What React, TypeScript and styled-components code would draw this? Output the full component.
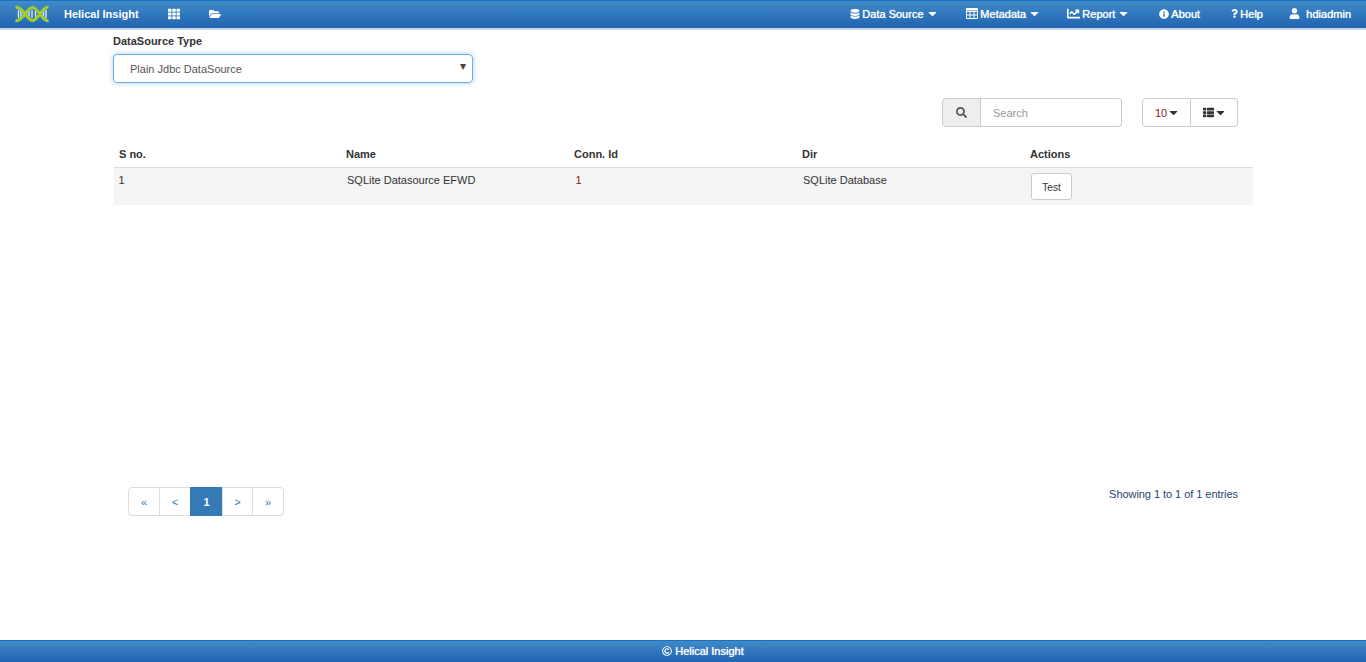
import React from 'react';
import styled, { createGlobalStyle } from 'styled-components';
import {
  FaCaretDown,
  FaChartLine,
  FaDatabase,
  FaFolderOpen,
  FaInfoCircle,
  FaQuestion,
  FaRegCopyright,
  FaSearch,
  FaTh,
  FaThList,
  FaUser,
} from 'react-icons/fa';

const GlobalStyle = createGlobalStyle`
  html, body {
    margin: 0;
    padding: 0;
    height: 100%;
    background: #fff;
    font-family: "Liberation Sans", Arial, sans-serif;
    font-size: 11px;
    color: #333;
  }
  * { box-sizing: border-box; }
`;

const Logo = () => (
  <svg width="34" height="18" viewBox="0 0 34 18" fill="none">
    <path d="M3.5 5v8M6 6v6M14 6v6M17 5v8M20.5 6v6M28.5 6v6M31 5v8" stroke="#d6ecfa" strokeWidth="1.4" />
    <path d="M0.5 2.5 C4 1.5 7 5 10 9 C13 13 15 15.5 17.5 15.5 C20 15.5 22 13 25 9 C28 5 30 2 33.5 2" stroke="#a4cb2e" strokeWidth="3" />
    <path d="M0.5 15.5 C4 16.5 7 13 10 9 C13 5 15 2.5 17.5 2.5 C20 2.5 22 5 25 9 C28 13 30 16 33.5 16" stroke="#a4cb2e" strokeWidth="3" />
  </svg>
);

const GridIcon = () => (
  <svg width="12" height="11" viewBox="0 0 12 11" fill="none" stroke="currentColor">
    <path d="M0.5 0.5h11v10h-11zM0.5 3.5h11M0.5 7h11M4 0.5v10M8 0.5v10" strokeWidth="1" />
    <path d="M0.5 1.5h11" strokeWidth="1.6" />
  </svg>
);

const columns = ['S no.', 'Name', 'Conn. Id', 'Dir', 'Actions'];

export default function App() {
  return (
    <>
      <GlobalStyle />
      <Page>
        <NavBar>
          <NavLeft>
            <LogoWrap><Logo /></LogoWrap>
            <Brand>Helical Insight</Brand>
            <NavIcon $left={29}><FaTh size={12} /></NavIcon>
            <NavIcon $left={29}><FaFolderOpen size={12} /></NavIcon>
          </NavLeft>
          <NavRight>
            <NavItem $width={116}><FaDatabase size={10} />Data Source<FaCaretDown size={13} /></NavItem>
            <NavItem $width={101}><GridIcon />Metadata<FaCaretDown size={13} /></NavItem>
            <NavItem $width={92}><FaChartLine size={13} />Report<FaCaretDown size={13} /></NavItem>
            <NavItem $width={71}><FaInfoCircle size={10} />About</NavItem>
            <NavItem $width={59} $tight><FaQuestion size={9} />Help</NavItem>
            <UserItem><FaUser size={11} />hdiadmin</UserItem>
          </NavRight>
        </NavBar>

        <Main>
          <Label>DataSource Type</Label>
          <SelectBox>
            Plain Jdbc DataSource
            <SelectArrow>▾</SelectArrow>
          </SelectBox>

          <Toolbar>
            <SearchGroup>
              <SearchAddon><FaSearch size={11} /></SearchAddon>
              <SearchInput>Search</SearchInput>
            </SearchGroup>
            <ButtonGroup>
              <GroupButton $width={49}><PageSize>10</PageSize><FaCaretDown size={13} /></GroupButton>
              <GroupButton $width={47}><FaThList size={11} /><FaCaretDown size={13} /></GroupButton>
            </ButtonGroup>
          </Toolbar>

          <Table>
            <HeadRow>
              {columns.map((c) => <HeadCell key={c}>{c}</HeadCell>)}
            </HeadRow>
            <BodyRow>
              <Cell $raise>1</Cell>
              <Cell>SQLite Datasource EFWD</Cell>
              <Cell $accent>1</Cell>
              <Cell>SQLite Database</Cell>
              <ActionCell><TestButton>Test</TestButton></ActionCell>
            </BodyRow>
          </Table>

          <PagerRow>
            <Pager>
              <PageLink $width={32}>«</PageLink>
              <PageLink $width={32}>&lt;</PageLink>
              <PageLink $width={33} $active>1</PageLink>
              <PageLink $width={31}>&gt;</PageLink>
              <PageLink $width={32}>»</PageLink>
            </Pager>
            <Entries>Showing 1 to 1 of 1 entries</Entries>
          </PagerRow>
        </Main>

        <Footer><FaRegCopyright size={10} />Helical Insight</Footer>
      </Page>
    </>
  );
}

const Page = styled.div`
  display: flex;
  flex-direction: column;
  height: 662px;
  overflow: hidden;
`;

const NavBar = styled.header`
  flex: none;
  height: 30px;
  padding-bottom: 2px;
  display: flex;
  justify-content: space-between;
  align-items: center;
  color: #fff;
  background: linear-gradient(to bottom, #3f8bc9 0%, #2163b0 100%);
  border-top: 1px solid #1b6fc0;
  border-bottom: 2px solid #c9d6e2;
  font-size: 11px;
`;

const NavLeft = styled.div`
  display: flex;
  align-items: center;
`;

const LogoWrap = styled.div`
  display: flex;
  margin-left: 15px;
`;

const Brand = styled.span`
  margin-left: 15px;
  font-weight: 700;
`;

const NavIcon = styled.span<{ $left: number }>`
  display: flex;
  margin-left: ${(p) => p.$left}px;
`;

const NavRight = styled.nav`
  display: flex;
  align-items: center;
  padding-right: 15px;
`;

const NavItem = styled.span<{ $width: number; $tight?: boolean }>`
  width: ${(p) => p.$width}px;
  display: flex;
  align-items: center;
  gap: ${(p) => (p.$tight ? 1 : 2)}px;
  text-shadow: 0 0 1px #fff;
`;

const UserItem = styled.span`
  display: flex;
  align-items: center;
  gap: 6px;
  text-shadow: 0 0 1px #fff;
`;

const Main = styled.main`
  flex: 1;
  padding: 5px 113px 0 113px;
`;

const Label = styled.div`
  font-weight: 700;
  font-size: 11px;
  line-height: 13px;
  margin-bottom: 6px;
`;

const SelectBox = styled.div`
  position: relative;
  width: 360px;
  height: 29px;
  padding-left: 16px;
  line-height: 29px;
  font-size: 11px;
  color: #555;
  border: 1px solid #66afe9;
  border-radius: 4px;
  box-shadow: 0 0 5px rgba(102, 175, 233, 0.6);
`;

const SelectArrow = styled.span`
  position: absolute;
  right: 6px;
  top: -3px;
  font-size: 12px;
  color: #444;
`;

const Toolbar = styled.div`
  display: flex;
  justify-content: flex-end;
  gap: 20px;
  width: 1125px;
  margin-top: 15px;
`;

const SearchGroup = styled.div`
  display: flex;
  width: 180px;
  height: 29px;
`;

const SearchAddon = styled.span`
  width: 39px;
  display: flex;
  align-items: center;
  justify-content: center;
  background: #eee;
  color: #555;
  border: 1px solid #ccc;
  border-radius: 4px 0 0 4px;
`;

const SearchInput = styled.span`
  flex: 1;
  padding-left: 12px;
  line-height: 29px;
  color: #999;
  border: 1px solid #ccc;
  border-left: none;
  border-radius: 0 4px 4px 0;
`;

const ButtonGroup = styled.div`
  display: flex;
  height: 29px;
`;

const GroupButton = styled.span<{ $width: number }>`
  width: ${(p) => p.$width}px;
  padding-left: 2px;
  display: flex;
  align-items: center;
  justify-content: center;
  color: #333;
  border: 1px solid #ccc;
  &:first-child { border-radius: 4px 0 0 4px; }
  &:last-child { border-left: none; border-radius: 0 4px 4px 0; }
`;

const PageSize = styled.span`
  color: #7a1f1f;
`;

const Table = styled.div`
  width: 1139px;
  margin: 16px 0 0 1px;
  min-height: 344px;
`;

const HeadRow = styled.div`
  display: grid;
  grid-template-columns: 227px repeat(4, 228px);
  height: 25px;
  padding-bottom: 2px;
  align-items: center;
  border-bottom: 1px solid #ddd;
`;

const HeadCell = styled.div`
  padding-left: 5px;
  font-weight: 700;
  font-size: 11px;
`;

const BodyRow = styled.div`
  display: grid;
  grid-template-columns: 227px repeat(4, 228px);
  height: 37px;
  background: #f4f4f4;
`;

const Cell = styled.div<{ $raise?: boolean; $accent?: boolean }>`
  padding: ${(p) => (p.$raise ? '6px 5px 0 4.6px' : p.$accent ? '6px 5px 0 6.6px' : '6px 5px 0 6px')};
  font-size: 11px;
  line-height: 13px;
  color: ${(p) => (p.$accent ? '#8b1a1a' : '#333')};
`;

const ActionCell = styled.div`
  padding: 5px 0 0 6px;
`;

const TestButton = styled.span`
  display: flex;
  width: 41px;
  height: 27px;
  padding-top: 1px;
  align-items: center;
  justify-content: center;
  font-size: 10px;
  background: #fff;
  border: 1px solid #ccc;
  border-radius: 3px;
`;

const PagerRow = styled.div`
  display: flex;
  justify-content: space-between;
  align-items: flex-start;
  width: 1125px;
  padding-left: 15px;
`;

const Pager = styled.div`
  display: flex;
  height: 29px;
`;

const PageLink = styled.span<{ $width: number; $active?: boolean }>`
  width: ${(p) => p.$width}px;
  display: flex;
  align-items: center;
  justify-content: center;
  font-size: 11px;
  font-weight: ${(p) => (p.$active ? 700 : 400)};
  color: ${(p) => (p.$active ? '#fff' : '#337ab7')};
  background: ${(p) => (p.$active ? '#337ab7' : '#fff')};
  border: 1px solid ${(p) => (p.$active ? '#337ab7' : '#ddd')};
  margin-left: -1px;
  &:first-child { margin-left: 0; border-radius: 4px 0 0 4px; }
  &:last-child { border-radius: 0 4px 4px 0; }
`;

const Entries = styled.div`
  padding: 1px 0 0 0;
  line-height: 13px;
  font-size: 11px;
  letter-spacing: -0.05px;
  color: #26456b;
`;

const Footer = styled.footer`
  flex: none;
  height: 22px;
  padding: 0 0 2px 40px;
  display: flex;
  align-items: center;
  justify-content: center;
  gap: 3px;
  color: #fff;
  font-size: 11px;
  text-shadow: 0 0 1px #fff;
  background: linear-gradient(to bottom, #3f8bc9 0%, #2163b0 100%);
  border-top: 1px solid #1b6fc0;
`;
